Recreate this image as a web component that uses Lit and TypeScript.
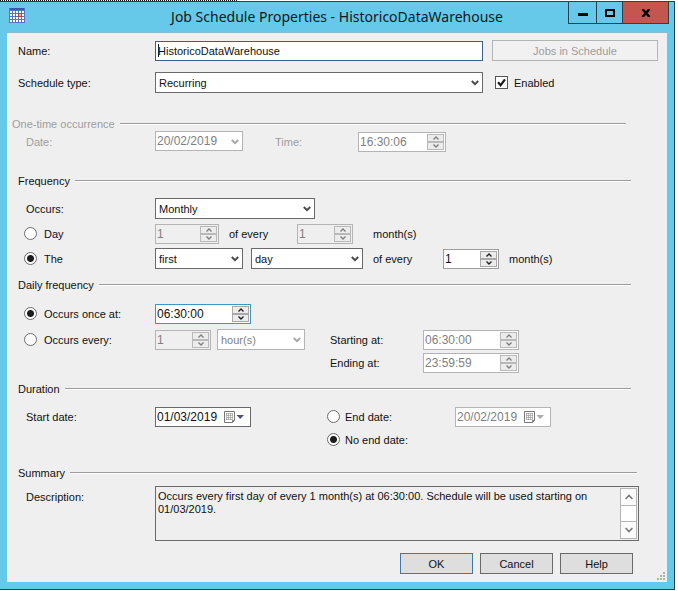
import { LitElement, html, css, svg } from "lit";
import { customElement } from "lit/decorators.js";

const chevronDown = html`<svg class="chev" viewBox="0 0 8 6" width="8" height="6" aria-hidden="true">
  <path d="M0.8 1l3.2 3.2L7.2 1" fill="none" stroke="currentColor" stroke-width="2" />
</svg>`;

const smallArrow = (up: boolean) => html`<svg viewBox="0 0 6 4" width="6" height="4" aria-hidden="true">
  <path d=${up ? "M0.5 3.5L3 1l2.5 2.5" : "M0.5 0.5L3 3 5.5 0.5"} fill="none" stroke="currentColor" stroke-width="1.4" />
</svg>`;

const scrollArrow = (up: boolean) => html`<svg viewBox="0 0 8 6" width="8" height="6" aria-hidden="true">
  <path d=${up ? "M0.6 5L4 1.4 7.4 5" : "M0.6 1L4 4.6 7.4 1"} fill="none" stroke="currentColor" stroke-width="1.5" />
</svg>`;

const calendar = html`<svg viewBox="0 0 20 12" width="20" height="12" aria-hidden="true">
  <path d="M0.5 0.5h10v9l-2 2h-8z" fill="#fff" stroke="currentColor" />
  <path d="M8.5 11.5v-2h2" fill="none" stroke="currentColor" />
  <path d="M2 2.5h7M2 4.5h7M2 6.5h7M2 8.5h6M2.5 2v7M4.5 2v7M6.5 2v7M8.5 2v7" stroke="currentColor" stroke-width="0.7" opacity="0.7" />
  <path class="tri" d="M12.5 4h7.5l-3.8 4z" />
</svg>`;

const appIcon = html`<svg class="app-icon" viewBox="0 0 16 15" width="16" height="15" aria-hidden="true">
  <rect width="16" height="15" fill="#5674bd" />
  <rect x="1" y="0" width="14" height="2" fill="#3c5aa8" />
  ${[0, 1, 2, 3].map((r) =>
    [0, 1, 2, 3, 4].map(
      (c) => svg`<rect x=${1 + c * 3} y=${3 + r * 3} width="2" height="2" fill="#ffffff" />`
    )
  )}
  <rect x="9" y="5" width="4" height="4" fill="#d0392c" />
  <rect x="10" y="6" width="2" height="2" fill="#f3b9b0" />
</svg>`;

type FieldOptions = { disabled?: boolean; gray?: boolean; focus?: boolean };

const combo = (id: string, value: string, size: string, label = "", disabled = false) => html`
  <span class="combo ${size} ${disabled ? "off" : ""}">
    <select id=${id} aria-label=${label || value} ?disabled=${disabled}>
      <option>${value}</option>
    </select>
    ${chevronDown}
  </span>
`;

const spinner = (id: string, value: string, size: string, label: string, o: FieldOptions = {}) => html`
  <span class="spin ${size} ${o.disabled ? "off" : ""} ${o.gray ? "gray" : ""} ${o.focus ? "focus" : ""}">
    <input id=${id} type="text" aria-label=${label} .value=${value} ?disabled=${!!o.disabled} />
    <span class="steps">
      <button type="button" aria-label="Increase" ?disabled=${!!o.disabled}>${smallArrow(true)}</button>
      <button type="button" aria-label="Decrease" ?disabled=${!!o.disabled}>${smallArrow(false)}</button>
    </span>
  </span>
`;

const datePicker = (id: string, value: string, label: string, disabled = false) => html`
  <span class="date w96 ${disabled ? "off" : ""}">
    <input id=${id} type="text" aria-label=${label} .value=${value} ?disabled=${disabled} />
    <button type="button" class="pick" aria-label="Open calendar" ?disabled=${disabled}>${calendar}</button>
  </span>
`;

const radio = (name: string, text: string, checked: boolean) => html`
  <label class="choice"><input type="radio" name=${name} .checked=${checked} />${text}</label>
`;

@customElement("app-root")
export class AppRoot extends LitElement {
  static styles = css`
    :host {
      display: block;
      background: #fff;
      color: #111;
      font: 11px/14px "Liberation Sans", Arial, sans-serif;
    }
    *, *::before, *::after { box-sizing: border-box; }
    input, button, select, textarea {
      font: inherit;
      color: inherit;
      margin: 0;
      padding: 0;
      border: 0;
      border-radius: 0;
      background: none;
      outline: none;
      min-width: 0;
    }
    svg { display: block; }
    h1, h2, p { margin: 0; font: inherit; }

    .selection { width: 35%; height: 1px; background: repeating-linear-gradient(90deg, #111 0 1px, #fff 1px 2px); }
    .window {
      margin-right: 3px;
      border: solid #24424f;
      border-width: 1px 1px 1px 0;
      background: #67c9e9;
      padding: 0 7px 7px;
    }
    .titlebar {
      display: grid;
      grid-template-columns: 1fr auto 1fr;
      height: 30px;
    }
    .app-icon { margin: 6px 2px; }
    .title {
      font: 14px/30px "Noto Sans", "Open Sans", sans-serif;
      color: #0c1a20;
      white-space: nowrap;
    }
    .controls { display: flex; justify-self: end; height: 22px; margin-right: -2px; }
    .controls button {
      width: 28px;
      border: solid #24424f;
      border-width: 0 0 1px 1px;
      display: grid;
      place-items: center;
    }
    .controls .max { width: 26px; }
    .controls .close { width: 47px; background: #c4564f; border-right-width: 1px; }

    .client {
      position: relative;
      background: #efefef;
      border-top: 1px solid #8fb9c8;
      padding: 7px 9px 8px 11px;
    }
    .row { display: flex; align-items: center; height: 21px; }
    .row + .row { margin-top: 4px; }
    .row + .row.loose { margin-top: 5px; }
    .row + .row.tight { margin-top: 2px; }
    .row + .row.far { margin-top: 11px; }
    .lead { width: 137px; flex: none; }
    .sub { padding-left: 8px; }
    .opt { padding-left: 6px; }
    .grow { flex: 1; }
    .side { width: 166px; margin-left: 9px; flex: none; }
    .off-text { color: #9d9d9d; }

    .group { padding-right: 27px; }
    .group.pale { margin-top: 24px; }
    .group.wide { margin-top: 22px; }
    .group.near { margin-top: 9px; }
    .group.mid { margin-top: 16px; }
    .group.summary { padding-right: 19px; }
    .legend { display: flex; align-items: center; height: 14px; margin-bottom: 10px; gap: 5px; }
    .legend.loose { margin-bottom: 11px; }
    .legend::after { content: ""; flex: 1; height: 2px; border-top: 1px solid #9c9c9c; background: #fff; }
    .pale .legend { margin: 0 5px 0 -6px; color: #9d9d9d; }
    .summary .legend { margin: 0 2px 6px 0; }

    .name { position: relative; display: flex; }
    .name input { width: 100%; height: 20px; border: 1px solid #3a5f8c; background: #fff; padding: 0 2px; }
    .caret { position: absolute; left: 3px; top: 3px; width: 1px; height: 13px; background: #123; }
    .jobs { height: 21px; border: 1px solid #b4b4b4; background: #f1f1f1; color: #9d9d9d; }
    .enabled { padding-left: 3px; display: flex; align-items: center; gap: 6px; }

    .check { position: relative; width: 13px; height: 13px; display: block; }
    .check input { appearance: none; display: block; width: 13px; height: 13px; border: 1px solid #555; background: #fff; }
    .check svg { position: absolute; inset: 0; pointer-events: none; }

    .choice { display: flex; align-items: center; gap: 7px; white-space: nowrap; }
    .l-end .choice, .l-none .choice { gap: 5px; }
    .choice input {
      appearance: none;
      width: 13px;
      height: 13px;
      flex: none;
      border: 1px solid #6c6c6c;
      border-radius: 50%;
      background: #fff;
    }
    .choice input:checked { background: radial-gradient(circle, #1c1c1c 0 3px, #fff 4px); }

    .combo { position: relative; display: block; height: 21px; flex: none; }
    .combo.grow { flex: 1; }
    .combo select {
      appearance: none;
      display: block;
      width: 100%;
      height: 21px;
      border: 1px solid #6a6a6a;
      background: #fff;
      padding: 0 16px 0 3px;
    }
    .combo .chev { position: absolute; right: 4px; top: 8px; color: #4b4b4b; pointer-events: none; }
    .combo.off select { border-color: #b4b4b4; color: #7f7f7f; opacity: 1; }
    .combo.time select { padding-left: 1px; height: 20px; }
    .combo.off .chev { color: #a8a8a8; }

    .spin, .date {
      display: flex;
      height: 20px;
      flex: none;
      border: 1px solid #6a6a6a;
      background: #fff;
      padding: 1px;
      align-items: stretch;
    }
    .spin { border-color: #9d9d9d; }
    .spin input, .date input { flex: 1; width: 0; }
    .time { font-size: 12px; }
    .date { font-size: 12px; border-color: #6a6a6a; }
    .spin.focus { border-color: #3f97bd; }
    .steps { width: 17px; flex: none; display: grid; grid-template-rows: 1fr 1fr; }
    .steps button { border: 1px solid #a9a9a9; background: #ececec; display: grid; place-items: center; color: #222; }
    .off, .date.off { border-color: #b4b4b4; color: #7f7f7f; }
    .combo.off { border: 0; }
    .off .steps button { border-color: #b9b9b9; color: #7f7f7f; }
    .spin.gray { background: #efefef; }
    .pick { width: 25px; flex: none; display: grid; align-items: center; justify-content: start; color: #777; }
    .tri { fill: #4b5475; }
    .off .tri { fill: #ababab; }

    .w56 { width: 56px; }
    .w64 { width: 64px; }
    .w88 { width: 88px; }
    .w96 { width: 96px; }
    .w112 { width: 112px; }
    .w160 { width: 160px; }
    .g6 { margin-left: 6px; }
    .g8 { margin-left: 8px; }
    .g10 { margin-left: 10px; }
    .word { margin-left: 10px; width: 60px; white-space: nowrap; }
    .unit { margin-left: 20px; width: 50px; white-space: nowrap; }
    .l-time { margin-left: 32px; width: 83px; }
    .l-start { margin-left: 25px; width: 93px; }
    .l-start.from-left { margin-left: 312px; }
    .l-end { margin-left: 76px; width: 128px; }
    .l-none { margin-left: 309px; }

    .desc { display: flex; align-items: flex-start; }
    .desc .lead { padding-top: 4px; }
    .memo { flex: 1; display: flex; height: 55px; border: 1px solid #6a6a6a; padding: 1px; }
    .memo textarea { flex: 1; resize: none; overflow: hidden; line-height: 13px; padding: 2px 1px; }
    .bar { width: 17px; display: grid; grid-template-rows: 17px 1fr 17px; border: 1px solid #b4b4b4; background: #fff; color: #777; }
    .bar button { display: grid; place-items: center; background: #fbfbfb; }
    .bar button:first-child { border-bottom: 1px solid #b4b4b4; }
    .bar button:last-child { border-top: 1px solid #b4b4b4; }

    .actions { display: flex; justify-content: flex-end; gap: 7px; margin-top: 12px; padding-right: 25px; }
    .actions button { width: 73px; height: 21px; border: 1px solid #6a6a6a; background: #dedede; }
    .actions .primary { border-color: #3f78ac; }
    .grip { position: absolute; right: 2px; bottom: 2px; color: #b0b0b0; }
  `;

  render() {
    return html`
      <div class="selection"></div>
      <main class="window">
        <header class="titlebar">
          ${appIcon}
          <h1 class="title">Job Schedule Properties - HistoricoDataWarehouse</h1>
          <div class="controls">
            <button type="button" aria-label="Minimize">
              <svg viewBox="0 0 10 9" width="10" height="9"><path d="M0 5h10v3H0z" /></svg>
            </button>
            <button type="button" class="max" aria-label="Maximize">
              <svg viewBox="0 0 10 8" width="10" height="8"><path d="M1 1h8v6H1z" fill="none" stroke="#000" stroke-width="2" /></svg>
            </button>
            <button type="button" class="close" aria-label="Close">
              <svg viewBox="0 0 10 8" width="10" height="8"><path d="M1.5 0l7 8M8.5 0l-7 8" stroke="#000" stroke-width="2.4" /></svg>
            </button>
          </div>
        </header>

        <form class="client" @submit=${(e: Event) => e.preventDefault()}>
          <div class="row">
            <label class="lead" for="name">Name:</label>
            <span class="name grow">
              <input id="name" type="text" .value=${"HistoricoDataWarehouse"} />
              <span class="caret"></span>
            </span>
            <button type="button" class="jobs side" disabled>Jobs in Schedule</button>
          </div>
          <div class="row far">
            <label class="lead" for="type">Schedule type:</label>
            ${combo("type", "Recurring", "grow", "Schedule type")}
            <label class="enabled side">
              <span class="check">
                <input type="checkbox" .checked=${true} />
                <svg viewBox="0 0 13 13" width="13" height="13"><path d="M3 6.2l2.6 3L10 3.4" fill="none" stroke="#1c1c1c" stroke-width="2.2" /></svg>
              </span>
              Enabled
            </label>
          </div>

          <section class="group pale">
            <h2 class="legend">One-time occurrence</h2>
            <div class="row off-text">
              <label class="lead sub" for="date">Date:</label>
              ${combo("date", "20/02/2019", "w88 time", "Date", true)}
              <label class="l-time" for="time">Time:</label>
              ${spinner("time", "16:30:06", "w88 time", "Time", { disabled: true })}
            </div>
          </section>

          <section class="group wide">
            <h2 class="legend">Frequency</h2>
            <div class="row">
              <label class="lead sub" for="occurs">Occurs:</label>
              ${combo("occurs", "Monthly", "w160", "Occurs")}
            </div>
            <div class="row">
              <span class="lead opt">${radio("pattern", "Day", false)}</span>
              ${spinner("day", "1", "w64 time", "Day", { disabled: true, gray: true })}
              <span class="word">of every</span>
              <span class="g8"></span>
              ${spinner("day-months", "1", "w56 time", "Months", { disabled: true, gray: true })}
              <span class="unit">month(s)</span>
            </div>
            <div class="row">
              <span class="lead opt">${radio("pattern", "The", true)}</span>
              ${combo("ordinal", "first", "w88")}
              <span class="g8"></span>
              ${combo("unit", "day", "w112")}
              <span class="word">of every</span>
              <span class="g10"></span>
              ${spinner("the-months", "1", "w56 time", "Months")}
              <span class="word">month(s)</span>
            </div>
          </section>

          <section class="group near">
            <h2 class="legend loose">Daily frequency</h2>
            <div class="row">
              <span class="lead opt">${radio("daily", "Occurs once at:", true)}</span>
              ${spinner("once", "06:30:00", "w96 time", "Occurs once at", { focus: true })}
            </div>
            <div class="row loose">
              <span class="lead opt">${radio("daily", "Occurs every:", false)}</span>
              ${spinner("every", "1", "w56 time", "Occurs every", { disabled: true, gray: true })}
              <span class="g6"></span>
              ${combo("every-unit", "hour(s)", "w88", "", true)}
              <label class="l-start" for="start-at">Starting at:</label>
              ${spinner("start-at", "06:30:00", "w96 time", "Starting at", { disabled: true })}
            </div>
            <div class="row tight">
              <label class="l-start from-left" for="end-at">Ending at:</label>
              ${spinner("end-at", "23:59:59", "w96 time", "Ending at", { disabled: true })}
            </div>
          </section>

          <section class="group near">
            <h2 class="legend">Duration</h2>
            <div class="row">
              <label class="lead sub" for="start-date">Start date:</label>
              ${datePicker("start-date", "01/03/2019", "Start date")}
              <span class="l-end">${radio("end", "End date:", false)}</span>
              ${datePicker("end-date", "20/02/2019", "End date", true)}
            </div>
            <div class="row tight">
              <span class="l-none">${radio("end", "No end date:", true)}</span>
            </div>
          </section>

          <section class="group mid summary">
            <h2 class="legend">Summary</h2>
            <div class="desc">
              <label class="lead sub" for="description">Description:</label>
              <div class="memo">
                <textarea id="description" readonly .value=${"Occurs every first day of every 1 month(s) at 06:30:00. Schedule will be used starting on 01/03/2019."}></textarea>
                <div class="bar">
                  <button type="button" aria-label="Scroll up">${scrollArrow(true)}</button>
                  <span></span>
                  <button type="button" aria-label="Scroll down">${scrollArrow(false)}</button>
                </div>
              </div>
            </div>
          </section>

          <footer class="actions">
            <button type="submit" class="primary">OK</button>
            <button type="button">Cancel</button>
            <button type="button">Help</button>
          </footer>
          <svg class="grip" viewBox="0 0 8 8" width="8" height="8" fill="currentColor" aria-hidden="true">
            <path d="M6 0h2v2H6zM3 3h2v2H3zM6 3h2v2H6zM0 6h2v2H0zM3 6h2v2H3zM6 6h2v2H6z" />
          </svg>
        </form>
      </main>
    `;
  }
}
